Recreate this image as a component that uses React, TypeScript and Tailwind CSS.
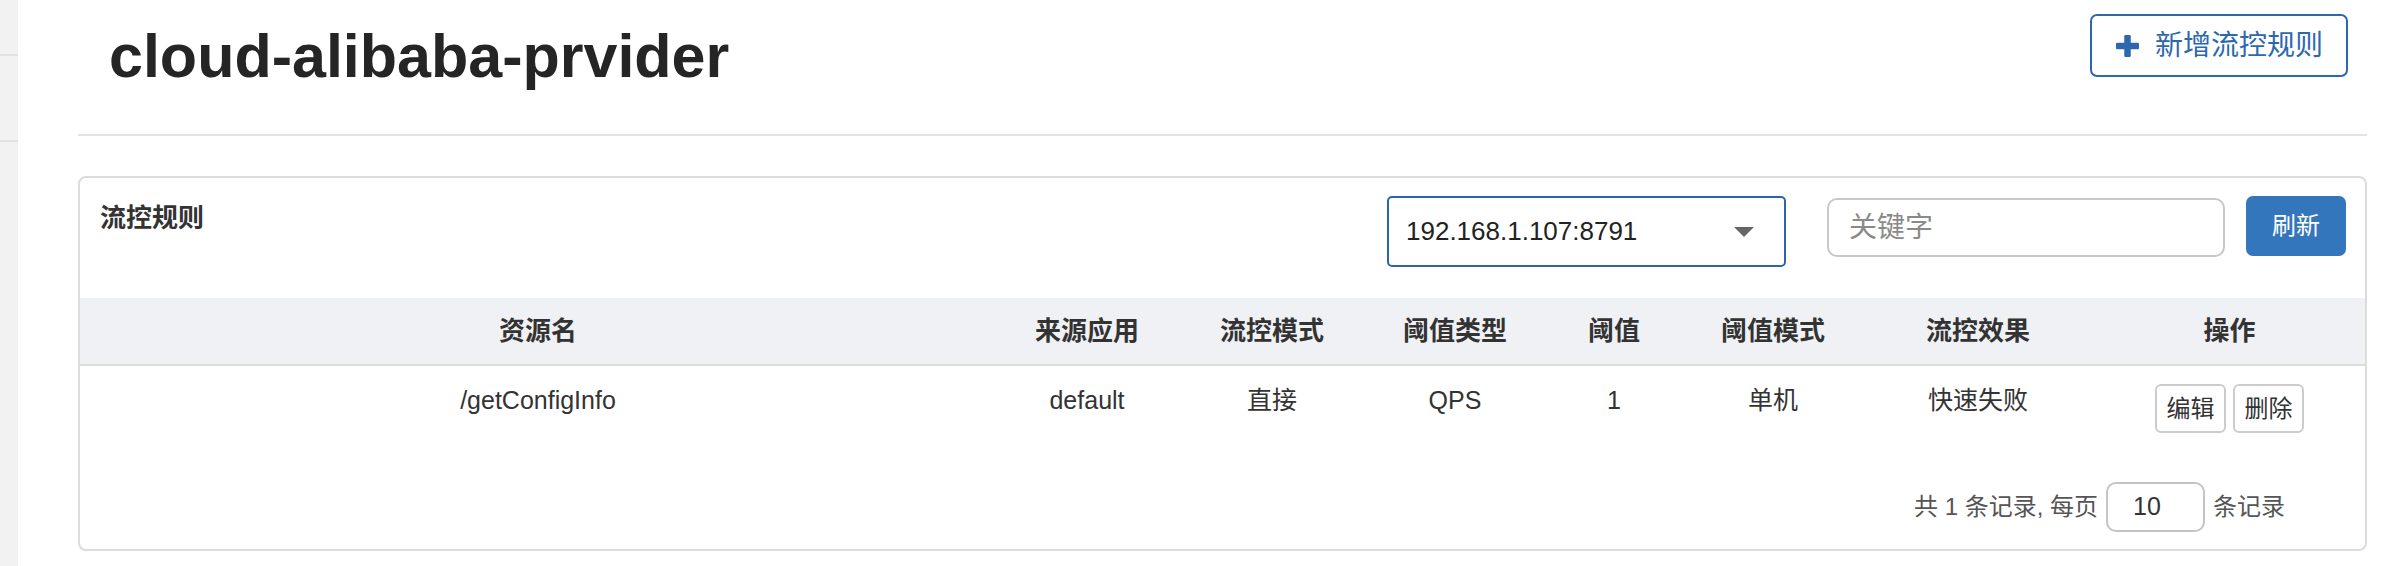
import React from "react";

const columns = [
  { key: "resource", label: "资源名" },
  { key: "app", label: "来源应用" },
  { key: "mode", label: "流控模式" },
  { key: "gradeType", label: "阈值类型" },
  { key: "count", label: "阈值" },
  { key: "cluster", label: "阈值模式" },
  { key: "effect", label: "流控效果" },
  { key: "ops", label: "操作" },
];

const rules = [
  {
    id: 1,
    resource: "/getConfigInfo",
    app: "default",
    mode: "直接",
    gradeType: "QPS",
    count: "1",
    cluster: "单机",
    effect: "快速失败",
  },
];

const gridCols =
  "grid grid-cols-[916px_182px_188px_178px_140px_178px_232px_1fr]";

function PlusIcon() {
  return (
    <svg width="23" height="22" viewBox="0 0 23 22" fill="#2d68ad">
      <rect x="0" y="7.75" width="23" height="6.5" rx="1.2" />
      <rect x="8.25" y="0" width="6.5" height="22" rx="1.2" />
    </svg>
  );
}

export default function App() {
  return (
    <div className="flex min-h-[566px] bg-white font-['Liberation_Sans','Noto_Sans_CJK_SC',sans-serif]">
      {/* sidebar sliver */}
      <aside className="w-[18px] shrink-0 bg-[#f2f2f2]">
        <div className="h-[56px] border-b-2 border-[#e2e2e2]" />
        <div className="h-[86px] border-b-2 border-[#e2e2e2]" />
      </aside>

      <main className="flex-1 pl-[60px] pr-[31px]">
        <div className="flex h-[134px] items-start justify-between">
          <h1 className="mt-[26px] pl-[31px] text-[61px] font-bold leading-[61px] text-[#252525]">
            cloud-alibaba-prvider
          </h1>
          <button className="mr-[19px] mt-[14px] flex h-[63px] w-[258px] items-center gap-[16px] rounded-[7px] border-2 border-[#2d68ad] pl-[24px] text-[28px] text-[#2d68ad]">
            <PlusIcon />
            <span>新增流控规则</span>
          </button>
        </div>
        <div className="h-[2px] bg-[#e3e3e3]" />

        <section className="mt-[40px] rounded-[8px] border-2 border-[#dcdcdc]">
          <div className="flex items-start pb-[31px] pl-[20px] pr-[19px] pt-[18px]">
            <div className="text-[26px] font-bold leading-[44px] text-[#333]">流控规则</div>
            <div className="ml-auto flex items-start">
              <div className="flex h-[71px] w-[399px] items-center justify-between rounded-[5px] border-2 border-[#2b64a8] pl-[17px] pr-[30px] text-[26px] text-[#222]">
                <span>192.168.1.107:8791</span>
                <svg width="20" height="10" viewBox="0 0 20 10">
                  <path d="M0 0 L20 0 L10 10 Z" fill="#666" />
                </svg>
              </div>
              <input
                placeholder="关键字"
                className="ml-[41px] mt-[2px] h-[59px] w-[398px] rounded-[10px] border-2 border-[#c8c8c8] pl-[20px] text-[28px] text-[#333] outline-none placeholder:text-[#8a8a8a]"
              />
              <button className="ml-[21px] h-[60px] w-[100px] rounded-[7px] bg-[#3476bb] text-[24px] text-white">
                刷新
              </button>
            </div>
          </div>

          <div className={`${gridCols} h-[68px] items-center border-b-2 border-[#dcdcdc] bg-[#f0f1f4] text-center text-[26px] font-bold text-[#333]`}>
            {columns.map((c) => (
              <div key={c.key}>{c.label}</div>
            ))}
          </div>

          {rules.map((r) => (
            <div key={r.id} className={`${gridCols} h-[100px] items-start text-center text-[25px] leading-[36px] text-[#333]`}>
              <div className="pt-[16px]">{r.resource}</div>
              <div className="pt-[16px]">{r.app}</div>
              <div className="pt-[16px]">{r.mode}</div>
              <div className="pt-[16px]">{r.gradeType}</div>
              <div className="pt-[16px]">{r.count}</div>
              <div className="pt-[16px]">{r.cluster}</div>
              <div className="pt-[16px]">{r.effect}</div>
              <div className="flex justify-center gap-[7px] pt-[18px]">
                <button className="h-[49px] w-[71px] rounded-[6px] border-2 border-[#cccccc] text-[24px] text-[#333]">编辑</button>
                <button className="h-[49px] w-[71px] rounded-[6px] border-2 border-[#cccccc] text-[24px] text-[#333]">删除</button>
              </div>
            </div>
          ))}

          <div className="flex items-center justify-end pb-[17px] pr-[80px] pt-[16px] text-[24px] text-[#555]">
            <span>共 1 条记录, 每页</span>
            <div className="ml-[8px] flex h-[50px] w-[99px] items-center rounded-[10px] border-2 border-[#c4c4c4] pl-[25px] text-[25px] text-[#333]">
              10
            </div>
            <span className="ml-[8px]">条记录</span>
          </div>
        </section>
      </main>
    </div>
  );
}
